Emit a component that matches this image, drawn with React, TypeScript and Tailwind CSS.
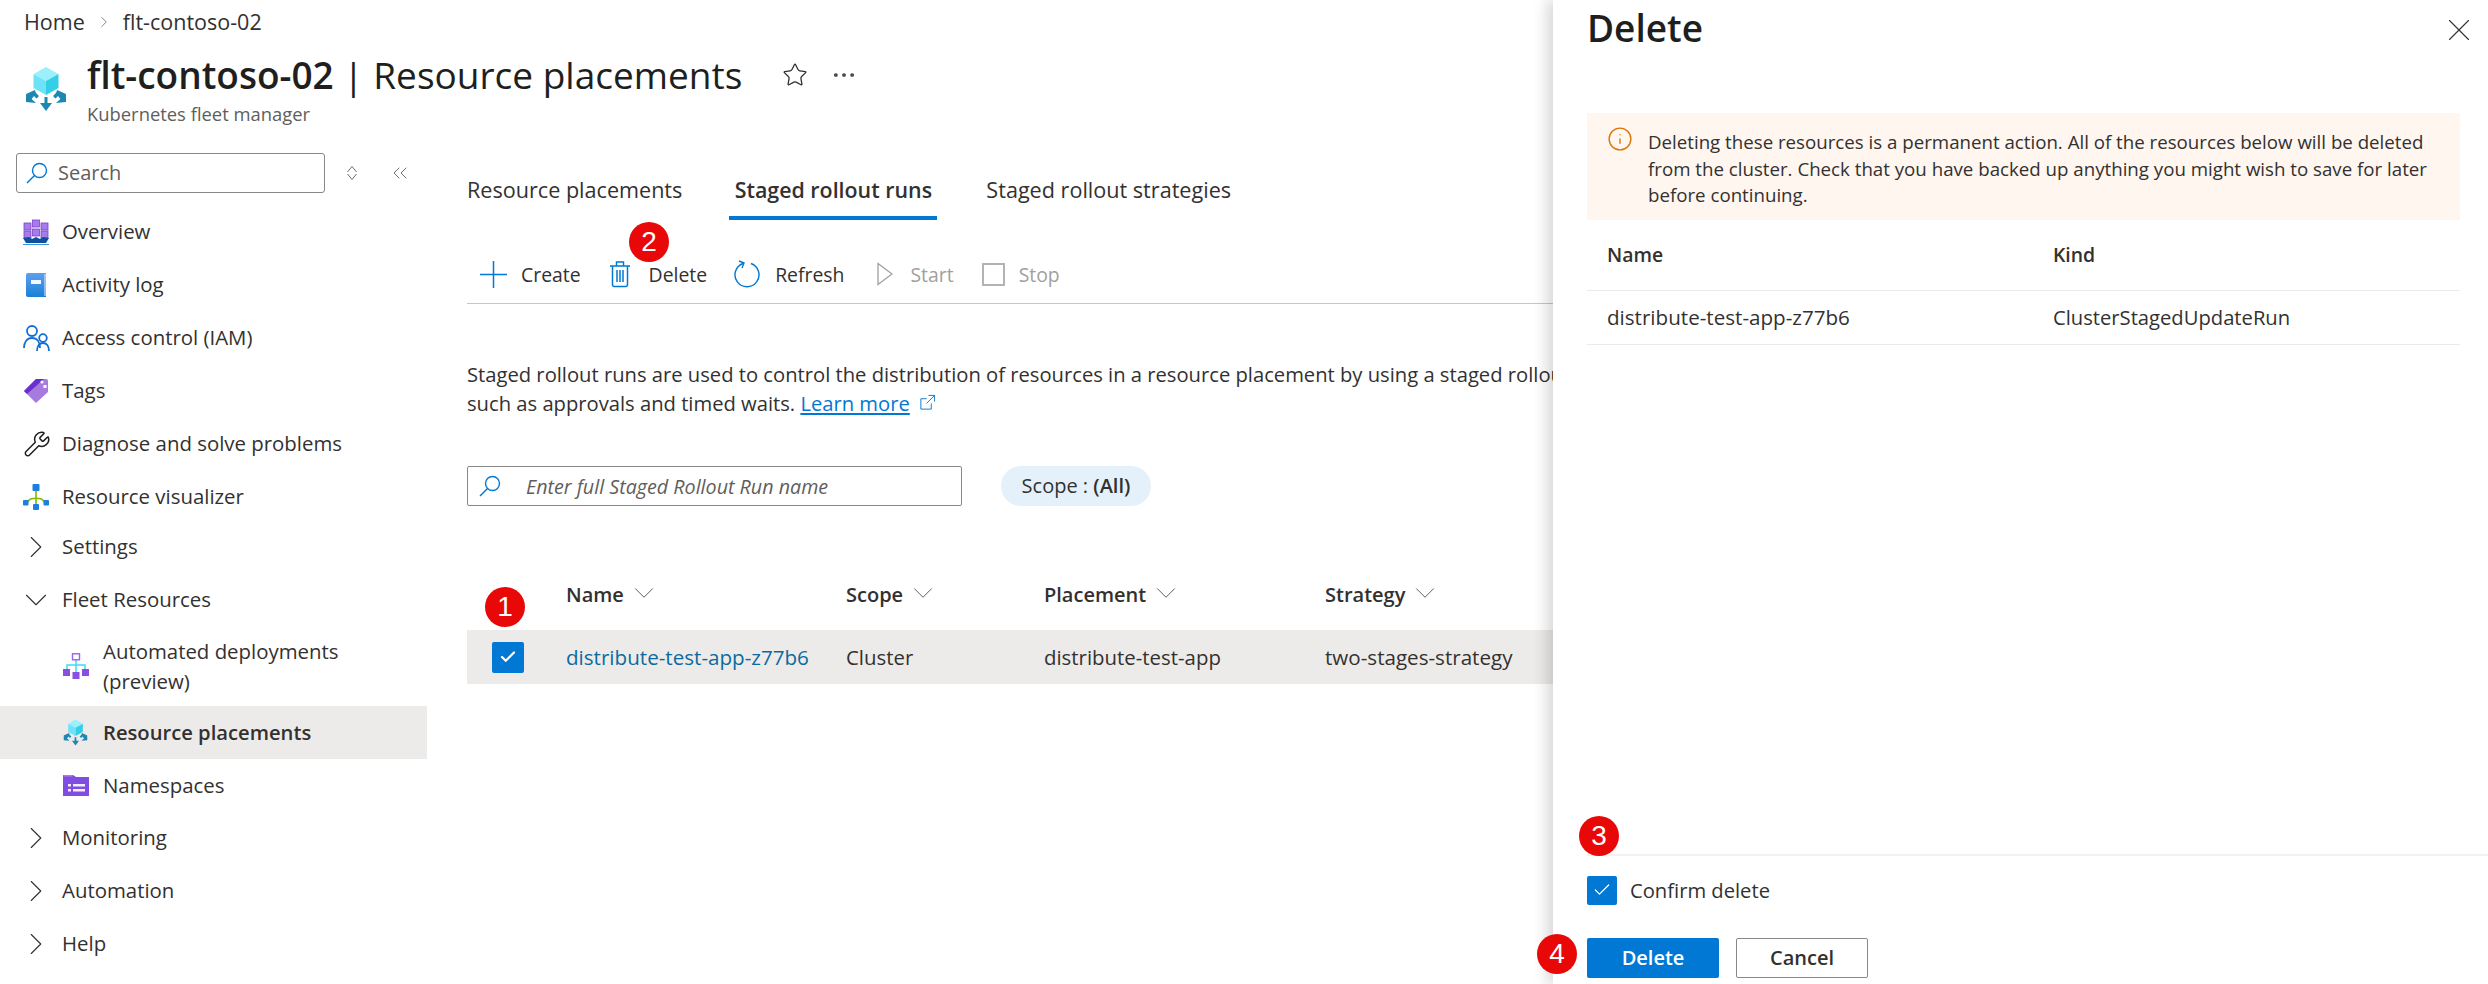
import { Check, ChevronDown, ChevronRight, ChevronsLeft, Ellipsis, Info, Star, Wrench, X } from "lucide-react";
import type { ReactNode } from "react";

function CubeIcon({ className }: { className: string }) {
  return (
    <svg viewBox="0 0 42 46" className={className}>
      <polygon points="21,1 33.5,8 21,15 8.5,8" fill="#9cf0fc" />
      <polygon points="8.5,8 21,15 21,29 8.5,22" fill="#6ee3f7" />
      <polygon points="33.5,8 21,15 21,29 33.5,22" fill="#32cfe6" />
      <g fill="#1b87b3">
        <rect x="19.5" y="31" width="3" height="8" />
        <polygon points="15,37 27,37 21,45" />
        <polygon points="1,28 5,35 9,30 11.5,32.5 14,30 11.5,27.5 10.5,26 10,24" />
        <polygon points="1,28 11,37 1,36" />
        <polygon points="41,28 37,35 33,30 30.5,32.5 28,30 30.5,27.5 31.5,26 32,24" />
        <polygon points="41,28 31,37 41,36" />
      </g>
    </svg>
  );
}

function SearchGlyph() {
  return (
    <svg viewBox="0 0 22 22" className="w-[22px] h-[22px] shrink-0" fill="none" stroke="#0078d4" strokeWidth="1.4">
      <circle cx="13.5" cy="8.5" r="7" />
      <path d="M8.5 13.5 L1 21" />
    </svg>
  );
}

function OverviewIcon() {
  return (
    <svg viewBox="0 0 26 26" className="w-[26px] h-[26px]">
      <g fill="#a77be8" stroke="#7a3fd1" strokeWidth="0.8">
        <rect x="1" y="4" width="7" height="7" />
        <rect x="9.5" y="1" width="7" height="7" />
        <rect x="18" y="4" width="7" height="7" />
        <rect x="1" y="12" width="7" height="7" />
        <rect x="9.5" y="10" width="7" height="7" />
        <rect x="18" y="12" width="7" height="7" />
      </g>
      <path d="M0 19 L6 18 L9 20 L13 18 L17 20 L20 18 L26 19 L23 24 L3 24 Z" fill="#0f4f9e" />
      <rect x="0" y="25" width="26" height="1" fill="#3a96dd" />
    </svg>
  );
}

function BookIcon() {
  return (
    <svg viewBox="0 0 26 26" className="w-[26px] h-[26px]">
      <defs>
        <linearGradient id="book" x1="0" y1="0" x2="0" y2="1">
          <stop offset="0" stopColor="#5ea0ef" />
          <stop offset="1" stopColor="#1b7fd6" />
        </linearGradient>
      </defs>
      <path d="M3 3 a2 2 0 0 1 2-2 H23 V25 H5 a2 2 0 0 1-2-2 Z" fill="url(#book)" />
      <rect x="21.5" y="2" width="1" height="22" fill="#e6f2fb" />
      <rect x="8" y="8" width="10" height="4" fill="#f4f8fc" />
    </svg>
  );
}

function PeopleIcon() {
  return (
    <svg viewBox="0 0 28 28" className="w-[28px] h-[28px]" fill="none" stroke="#0f6fd6" strokeWidth="1.8">
      <circle cx="9" cy="7" r="5" />
      <path d="M1 24 c0-6 3-10 8-10 s8 4 8 10" />
      <circle cx="20" cy="14" r="3.8" />
      <path d="M14 27 c0-5 2.5-8 6-8 s6 3 6 8" />
    </svg>
  );
}

function TagIcon() {
  return (
    <svg viewBox="0 0 26 26" className="w-[26px] h-[26px]">
      <path d="M1 13 L13 1 H23 a2 2 0 0 1 2 2 V14 L13 25 Z" fill="#a67be0" />
      <path d="M1 13 L13 1 H21 L4 16 Z" fill="#6b2fd0" />
      <circle cx="19" cy="4" r="1.6" fill="#fff" />
      <rect x="20.5" y="7" width="3" height="3" fill="#fff" />
    </svg>
  );
}

function TreeIcon() {
  return (
    <svg viewBox="0 0 26 26" className="w-[26px] h-[26px]">
      <path d="M13 7 V20 M5 18 C6 13 20 13 21 18" stroke="#7fba00" strokeWidth="1.6" fill="none" />
      <g fill="#1b7fe0">
        <rect x="9.5" y="0" width="7" height="7" rx="1" />
        <rect x="0" y="16" width="5.5" height="5.5" rx="1" />
        <rect x="20.5" y="16" width="5.5" height="5.5" rx="1" />
        <rect x="10" y="20" width="6" height="6" rx="1" />
      </g>
    </svg>
  );
}

function DeployIcon() {
  return (
    <svg viewBox="0 0 26 26" className="w-[26px] h-[26px]">
      <path d="M13 6 V20 M4 18 V12 H22 V18" stroke="#3ddcf2" strokeWidth="1.5" fill="none" />
      <rect x="9.5" y="0.8" width="7" height="6" fill="#fff" stroke="#9a63e8" strokeWidth="1.4" />
      <g fill="#8a4fe0">
        <rect x="0" y="16" width="7" height="7" />
        <rect x="19" y="16" width="7" height="7" />
        <rect x="9.5" y="19" width="7" height="7" />
      </g>
    </svg>
  );
}

function FolderIcon() {
  return (
    <svg viewBox="0 0 26 22" className="w-[26px] h-[22px]">
      <path d="M0 1 H10 L13 3 H26 V22 H0 Z" fill="#7f4ddf" />
      <rect x="0.5" y="1" width="9" height="1.6" fill="#a67be8" />
      <g fill="#f3ecfd">
        <rect x="5" y="10" width="3" height="2.5" />
        <rect x="5" y="15" width="3" height="2.5" />
        <rect x="10" y="10" width="12" height="2.5" />
        <rect x="10" y="15" width="12" height="2.5" />
      </g>
    </svg>
  );
}

function NavRow({ icon, label, className }: { icon: ReactNode; label: ReactNode; className: string }) {
  return (
    <div className={`flex items-center pl-[23px] ${className}`}>
      <span className="w-[39px] shrink-0 flex items-center">{icon}</span>
      <span>{label}</span>
    </div>
  );
}

function SubRow({ icon, label, className }: { icon: ReactNode; label: ReactNode; className: string }) {
  return (
    <div className={`flex items-center pl-[63px] ${className}`}>
      <span className="w-[40px] shrink-0 flex items-center">{icon}</span>
      <span>{label}</span>
    </div>
  );
}

const arrowRight = <ChevronRight className="w-[38px] h-[38px] -ml-[6px] shrink-0 text-[#323130]" strokeWidth={0.7} />;
const arrowDown = <ChevronDown className="w-[38px] h-[38px] -ml-[6px] shrink-0 text-[#323130]" strokeWidth={0.7} />;

function Sidebar() {
  return (
    <aside className="w-[427px] shrink-0">
      <div className="flex items-center h-[40px] mt-[7px] pl-[16px]">
        <div className="w-[309px] h-[40px] border border-[#8a8886] rounded-[3px] flex items-center pl-[9px] gap-[10px] text-[#605e5c] text-[20px]">
          <SearchGlyph />
          Search
        </div>
        <svg viewBox="0 0 12 16" className="ml-[21px] w-[12px] h-[16px]" fill="none" stroke="#605e5c" strokeWidth="0.9">
          <path d="M1.5 7 L6 1.5 L10.5 7 M1.5 9 L6 14.5 L10.5 9" />
        </svg>
        <ChevronsLeft className="ml-[30px] w-[24px] h-[24px] text-[#605e5c]" strokeWidth={0.9} />
      </div>
      <div className="mt-[12px]">
        <NavRow className="h-[53px]" icon={<OverviewIcon />} label="Overview" />
        <NavRow className="h-[53px]" icon={<BookIcon />} label="Activity log" />
        <NavRow className="h-[53px]" icon={<PeopleIcon />} label="Access control (IAM)" />
        <NavRow className="h-[53px]" icon={<TagIcon />} label="Tags" />
        <NavRow className="h-[53px]" icon={<Wrench className="w-[28px] h-[28px] text-[#201f1e]" strokeWidth={1.3} />} label="Diagnose and solve problems" />
        <NavRow className="h-[53px]" icon={<TreeIcon />} label="Resource visualizer" />
        <NavRow className="h-[53px] -mt-[3px]" icon={arrowRight} label="Settings" />
        <NavRow className="h-[53px]" icon={arrowDown} label="Fleet Resources" />
        <SubRow className="h-[80px] leading-[30px]" icon={<DeployIcon />} label={<>Automated deployments<br />(preview)</>} />
        <SubRow className="h-[53px] bg-[#edebe9] font-semibold text-[20.2px]" icon={<CubeIcon className="w-[25px] h-[27px]" />} label="Resource placements" />
        <SubRow className="h-[52px]" icon={<FolderIcon />} label="Namespaces" />
        <NavRow className="h-[53px]" icon={arrowRight} label="Monitoring" />
        <NavRow className="h-[53px]" icon={arrowRight} label="Automation" />
        <NavRow className="h-[53px]" icon={arrowRight} label="Help" />
      </div>
    </aside>
  );
}

function ToolButton({ icon, label, className }: { icon: ReactNode; label: string; className: string }) {
  return (
    <div className={`flex items-center ${className}`}>
      {icon}
      <span>{label}</span>
    </div>
  );
}

function Toolbar() {
  return (
    <div className="mt-[30px] h-[54px] pb-[4px] border-b border-[#c8c6c4] flex items-center pl-[13px] text-[19.4px]">
      <ToolButton
        className="gap-[14px]"
        label="Create"
        icon={
          <svg viewBox="0 0 27 27" className="w-[27px] h-[27px]" stroke="#0078d4" strokeWidth="1.5">
            <path d="M13.5 0 V27 M0 13.5 H27" />
          </svg>
        }
      />
      <ToolButton
        className="ml-[28px] gap-[18px]"
        label="Delete"
        icon={
          <svg viewBox="0 0 22 28" className="w-[22px] h-[28px]" fill="none" stroke="#0078d4" strokeWidth="1.5">
            <path d="M1 6 H21 M7.5 6 V2 H14.5 V6 M3.5 6 V25 a1.5 1.5 0 0 0 1.5 1.5 H17 a1.5 1.5 0 0 0 1.5-1.5 V6 M8 10 V22 M11 10 V22 M14 10 V22" />
          </svg>
        }
      />
      <ToolButton
        className="ml-[27px] gap-[15px]"
        label="Refresh"
        icon={
          <svg viewBox="0 0 26 28" className="w-[26px] h-[28px]" fill="none" stroke="#0078d4" strokeWidth="1.4">
            <path d="M9 3.5 A12 12 0 1 0 17 3.5" />
            <path d="M5 1 L10 3 L8 8" />
          </svg>
        }
      />
      <ToolButton
        className="ml-[33px] gap-[17px] text-[#a19f9d]"
        label="Start"
        icon={
          <svg viewBox="0 0 16 24" className="w-[16px] h-[24px]" fill="none" stroke="#a19f9d" strokeWidth="1.3">
            <path d="M1 1.5 L15 12 L1 22.5 Z" />
          </svg>
        }
      />
      <ToolButton className="ml-[28px] gap-[14px] text-[#a19f9d]" icon={<span className="w-[23px] h-[23px] border-2 border-[#b5b3b1] block" />} label="Stop" />
    </div>
  );
}

function HeaderCell({ label, className }: { label: string; className: string }) {
  return (
    <div className={`flex items-center gap-[3px] font-semibold text-[20px] ${className}`}>
      {label}
      <ChevronDown className="w-[34px] h-[34px] text-[#605e5c] -mt-[4px]" strokeWidth={0.7} />
    </div>
  );
}

function Main() {
  return (
    <main className="flex-1 pl-[40px] pt-[24px] min-w-0">
      <div className="flex h-[50px] text-[21.6px]">
        <div className="pt-[4px]">Resource placements</div>
        <div className="ml-[47px] w-[208px] pt-[4px] border-b-4 border-[#0078d4] text-center font-semibold text-[21.4px] leading-[32px] whitespace-nowrap">Staged rollout runs</div>
        <div className="ml-[49px] pt-[4px]">Staged rollout strategies</div>
      </div>
      <Toolbar />
      <div className="mt-[56px] leading-[29px] whitespace-nowrap text-[20.2px]">
        <p>Staged rollout runs are used to control the distribution of resources in a resource placement by using a staged rollout strategy</p>
        <p>
          such as approvals and timed waits.{" "}
          <a className="text-[#0078d4] underline">Learn more</a>
          <svg viewBox="0 0 18 18" className="inline-block ml-[9px] -mt-[6px] w-[17px] h-[17px]" fill="none" stroke="#0078d4" strokeWidth="1">
            <path d="M13 10 V16 H2 V5 H8 M10 1.5 H16.5 V8 M16.5 1.5 L8 10" />
          </svg>
        </p>
      </div>
      <div className="mt-[48px] flex items-center">
        <div className="w-[495px] h-[40px] border border-[#8a8886] rounded-[2px] flex items-center pl-[11px] gap-[25px] italic text-[#605e5c] text-[19.7px]">
          <SearchGlyph />
          <span className="pt-[2px]">Enter full Staged Rollout Run name</span>
        </div>
        <div className="ml-[39px] w-[150px] h-[40px] rounded-full bg-[#e5f1fa] flex items-center justify-center text-[20px]">
          Scope :&nbsp;<span className="font-semibold">(All)</span>
        </div>
      </div>
      <div className="mt-[66px] w-[1087px]">
        <div className="flex h-[58px] pb-[12px] items-center">
          <div className="w-[99px]" />
          <HeaderCell className="w-[280px]" label="Name" />
          <HeaderCell className="w-[198px]" label="Scope" />
          <HeaderCell className="w-[281px]" label="Placement" />
          <HeaderCell className="flex-1" label="Strategy" />
        </div>
        <div className="flex h-[54px] items-center bg-[#edebe9]">
          <div className="w-[99px] pl-[25px]">
            <span className="w-[32px] h-[31px] bg-[#0078d4] rounded-[2px] flex items-center justify-center">
              <Check className="w-[18px] h-[18px] text-white" strokeWidth={3} />
            </span>
          </div>
          <div className="w-[280px] text-[#0b6a9f] text-[20.6px]">distribute-test-app-z77b6</div>
          <div className="w-[198px]">Cluster</div>
          <div className="w-[281px]">distribute-test-app</div>
          <div className="flex-1 text-[20.6px]">two-stages-strategy</div>
        </div>
      </div>
    </main>
  );
}

function DeletePanel() {
  return (
    <div className="absolute top-0 bottom-0 left-[1553px] right-0 bg-white shadow-[-6px_0_14px_rgba(0,0,0,0.16)] flex flex-col">
      <div className="h-[113px] pl-[34px] pr-[10px] flex justify-between items-start">
        <h2 className="text-[37px] leading-[56px] font-semibold text-[#201f1e]">Delete</h2>
        <X className="mt-[11px] w-[38px] h-[38px] text-[#323130]" strokeWidth={0.7} />
      </div>
      <div className="ml-[34px] mr-[28px]">
        <div className="h-[107px] bg-[#fff6f0] flex text-[18.7px] leading-[26.5px] pt-[16px] pl-[20px]">
          <Info className="w-[26px] h-[26px] text-[#d97706] shrink-0 mt-[-3px]" strokeWidth={1.3} />
          <p className="ml-[15px] whitespace-nowrap">
            Deleting these resources is a permanent action. All of the resources below will be deleted
            <br />
            from the cluster. Check that you have backed up anything you might wish to save for later
            <br />
            before continuing.
          </p>
        </div>
        <div className="flex h-[71px] items-center border-b border-[#edebe9] font-semibold pl-[20px] text-[19.4px]">
          <div className="w-[446px]">Name</div>
          <div>Kind</div>
        </div>
        <div className="flex h-[54px] items-center border-b border-[#edebe9] pl-[20px]">
          <div className="w-[446px] text-[20.6px]">distribute-test-app-z77b6</div>
          <div className="text-[20.2px]">ClusterStagedUpdateRun</div>
        </div>
      </div>
      <div className="mt-auto h-[130px] border-t-2 border-[#f3f2f1] ml-[34px] pt-[19px]">
        <div className="flex items-center">
          <span className="w-[30px] h-[29px] bg-[#0078d4] rounded-[2px] flex items-center justify-center">
            <Check className="w-[20px] h-[20px] text-white" strokeWidth={1.5} />
          </span>
          <span className="ml-[13px] text-[20.2px]">Confirm delete</span>
        </div>
        <div className="mt-[33px] flex gap-[17px]">
          <button className="w-[132px] h-[40px] bg-[#0078d4] text-white font-semibold rounded-[2px] text-[20px]">Delete</button>
          <button className="w-[132px] h-[40px] border border-[#8a8886] font-semibold rounded-[2px] text-[20px]">Cancel</button>
        </div>
      </div>
    </div>
  );
}

function Badge({ n, className }: { n: number; className: string }) {
  return (
    <div className={`absolute w-[40px] h-[40px] rounded-full bg-[#e80808] text-white flex items-center justify-center text-[28px] font-['Liberation_Sans',sans-serif] ${className}`}>
      {n}
    </div>
  );
}

export default function App() {
  return (
    <div className="relative w-[2488px] h-[984px] overflow-hidden bg-white text-[#323130] text-[20.4px] font-['Open_Sans',sans-serif]">
      <div className="h-[44px] pl-[24px] flex items-center text-[21.5px]">
        Home
        <ChevronRight className="mx-[10px] w-[18px] h-[18px] text-[#605e5c]" strokeWidth={1} />
        flt-contoso-02
      </div>
      <div className="h-[102px] flex pl-[25px] pt-[6px]">
        <CubeIcon className="w-[42px] h-[46px] mt-[16px]" />
        <div className="ml-[20px]">
          <div className="flex items-center h-[50px]">
            <h1 className="text-[37px] text-[#201f1e] whitespace-nowrap">
              <span className="font-semibold">flt-contoso-02</span> | Resource placements
            </h1>
            <Star className="ml-[40px] w-[26px] h-[26px] text-[#323130]" strokeWidth={1.2} />
            <Ellipsis className="ml-[22px] w-[28px] h-[28px] text-[#323130]" strokeWidth={1.2} />
          </div>
          <div className="text-[18.4px] text-[#605e5c]">Kubernetes fleet manager</div>
        </div>
      </div>
      <div className="flex">
        <Sidebar />
        <Main />
      </div>
      <DeletePanel />
      <Badge n={1} className="left-[485px] top-[587px]" />
      <Badge n={2} className="left-[629px] top-[222px]" />
      <Badge n={3} className="left-[1579px] top-[816px]" />
      <Badge n={4} className="left-[1537px] top-[934px]" />
    </div>
  );
}
